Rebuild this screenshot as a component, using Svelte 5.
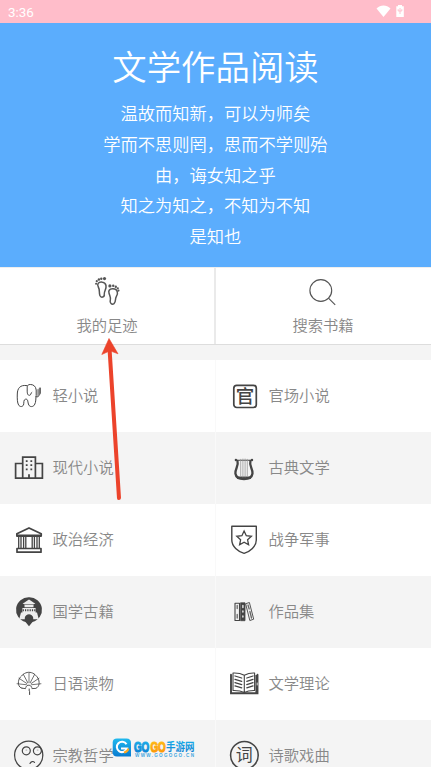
<script>
  const verses = ['温故而知新，可以为师矣', '学而不思则罔，思而不学则殆', '由，诲女知之乎', '知之为知之，不知为不知', '是知也'];
  const categories = [
    ['elephant', '轻小说'], ['official', '官场小说'],
    ['building', '现代小说'], ['lyre', '古典文学'],
    ['bank', '政治经济'], ['shield', '战争军事'],
    ['temple', '国学古籍'], ['books', '作品集'],
    ['tree', '日语读物'], ['openbook', '文学理论'],
    ['face', '宗教哲学'], ['lyric', '诗歌戏曲']
  ];
  const rays = [-84, -56, -28, 0, 28, 56, 84];
</script>

{#snippet icon(name)}
  <svg class="icon" viewBox="0 0 32 32" width="32" height="32" fill="none" stroke="#444" stroke-width="1.3" stroke-linejoin="round" stroke-linecap="round">
    {#if name === 'elephant'}
      <path d="M13.8 5.6C7 4.5 4.4 8.5 4.3 14C4.1 18 4.3 23 5.6 25C6.9 27.1 9.4 27 10.5 25C11.2 22.7 10.2 19.8 12.5 19.2C15.4 18.6 14.5 22.5 15.8 25C17 27.2 20 27 21.4 25C23.3 22 22.6 18 23.2 15.5V10C22.9 6.2 20.2 4.4 17.3 4.5C13.5 4.4 14.3 7.5 14.2 10C14.1 13 14.5 15.6 16.6 15.3C18.2 15 17.6 12.8 18.8 12.3" stroke-width="1" />
      <path d="M22.8 16.8H25L27.4 13.5V8" stroke-width=".9" />
      <path d="M25 9.5V16M26.4 8V14.5" stroke-width="1.2" stroke="#777" />
    {:else if name === 'official'}
      <rect x="4.8" y="5.3" width="22.5" height="22.2" rx="3" stroke-width="1.7" />
      <text x="16" y="23" class="seal">官</text>
    {:else if name === 'building'}
      <path d="M9.7 26.2V5.1H22.4V26.2M9.7 11.5H2.6V26.2H29.4V11.5H22.4" stroke-width="1.7" stroke-linejoin="miter" />
      <path d="M13.7 8.2V19M18.3 8.2V19" stroke-width="1.8" stroke-dasharray="1.8 2.3" stroke-linecap="butt" />
      <path d="M16 22.3V26" stroke-width="1.8" stroke-linecap="butt" />
    {:else if name === 'lyre'}
      <path d="M8.5 9C10 14 5.8 17 6.4 21.5C7 25.5 10.4 27 15 27C19.6 27 22.9 25.5 23.5 21.5C24.1 17 19.9 14 21.4 9" stroke-width="2.3" />
      <path d="M7.5 8.3H22.5" stroke-width="1.1" />
      <path d="M9 25.8H21" stroke-width="2.4" />
      <circle cx="6.9" cy="8" r="1.2" fill="#444" stroke="none" />
      <circle cx="23" cy="8" r="1.2" fill="#444" stroke="none" />
      <path d="M11.7 7.3V24M13.9 7V25M16.1 7V25M18.3 7.3V24" stroke-width=".8" stroke="#999" />
    {:else if name === 'bank'}
      <path d="M3.9 11.5V9.8L16 4L28.2 9.8V11.5Z" stroke-width="1.8" />
      <path d="M5.7 13V24M8 13V24M10.6 13V24M12.8 13V24M19.2 13V24M21.4 13V24M24 13V24M26.3 13V24" stroke-width="1.3" stroke-linecap="butt" />
      <path d="M4 24.5H28V28.2H4Z" stroke-width="1.7" />
      <path d="M4 12.2H28" stroke-width="1.6" />
    {:else if name === 'shield'}
      <path d="M2.8 2.2H27.3V16C27.3 22.5 21 27.5 15.1 29.4C9 27.5 2.8 22.5 2.8 16Z" stroke-width="1.4" />
      <path d="M15.1 7L17.3 11.7L22.4 12.3L18.6 15.8L19.6 20.8L15.1 18.3L10.6 20.8L11.6 15.8L7.8 12.3L12.9 11.7Z" stroke-width="1.3" stroke-linejoin="miter" />
    {:else if name === 'temple'}
      <path d="M16 1.2A12.6 12.6 0 0 1 19.5 26L16 30.3L12.5 26A12.6 12.6 0 0 1 16 1.2Z" fill="#444" stroke="none" />
      <path d="M9.6 7.2C12 6.8 13 5 16 3.5C19 5 20 6.8 22.4 7.2L20.8 8.3H11.2Z" fill="#eee" stroke="none" />
      <path d="M11.5 8.8H20.5V11.2H11.5ZM9.4 12H22.6V16.6H24L25.8 23.3H20.2V21.8C19.5 17 12.5 17 11.8 21.8V23.3H6.2L8 16.6H9.4Z" fill="#eee" stroke="none" />
      <path d="M9.7 14.3H22.5" stroke-width="2.1" stroke-dasharray="1.2 1.1" stroke-linecap="butt" />
    {:else if name === 'books'}
      <path d="M6 7.2H10.5V24.5H6Z" stroke-width="1.1" />
      <path d="M11.8 6.8H16V24.7H11.8Z" fill="#444" stroke-width=".8" />
      <path d="M17 7.6L20.4 6.5L24.7 23.2L21.2 24.4Z" stroke-width=".9" />
      <path d="M8.2 9.5V12.5M8.2 18.5V22M19 9L20.2 13M20.9 15.5L22.5 22" stroke-width="1.3" stroke="#666" />
      <path d="M13.9 9.5V11.5M13.9 15V16M13.9 20V21" stroke="#eee" stroke-width="1.4" />
    {:else if name === 'tree'}
      <path d="M9 20.2C4.5 19.5 4 11.5 8.5 8C12.5 3.1 19.3 3.1 23 7.7C27.5 11.5 27 19.5 22.5 20.4M9 20.2L12.5 20.6M22.5 20.4L19 20.6" stroke-width=".9" stroke-dasharray="5 .8" />
      {#each rays as angle}
        <path d="M16 14.5V5" transform="rotate({angle} 16 17)" stroke-width=".7" />
      {/each}
      <path d="M12.8 19.4C13.4 16.4 18 16.4 18.8 19.4M16.2 21V23L16.6 23.6V26.5" stroke-width="1" />
    {:else if name === 'openbook'}
      <path d="M2 6.8V25.3H28.5V6.8" stroke-width="1.9" stroke-linejoin="miter" />
      <path d="M4 5C8 4.8 12 5.4 15.3 7.2C18.8 5.4 22.4 4.8 25.6 5V22.5C22 22.4 18.5 22.8 15.3 24.5C12 22.8 8.2 22.4 4 22.5ZM15.3 7.5V25" stroke-width="1.1" />
      <path d="M6 8L12.7 10M6 11.3L12.7 13.3M6 14.6L12.7 16.6M6 17.9L12.7 19.9M24 8L17.8 10M24 11.3L17.8 13.3M24 14.6L17.8 16.6M24 17.9L17.8 19.9" stroke-width="1.3" />
      <path d="M27.7 7V25" stroke-width="2.6" stroke-linecap="butt" />
      <path d="M28.2 15V17" stroke="#ddd" stroke-width="1" />
    {:else if name === 'face'}
      <circle cx="15.7" cy="15.3" r="14.1" stroke-width="1.3" />
      <circle cx="13.3" cy="10.8" r="4" stroke-width="1.2" />
      <circle cx="24.4" cy="10.8" r="4" stroke-width="1.2" />
      <path d="M13 10.1H13.8M24.2 10.1H25" stroke-width=".8" stroke="#999" />
      <path d="M17 23.5C18 21.3 20.2 21 21.5 22.3" stroke-width="1.2" />
    {:else}
      <circle cx="15.4" cy="15.3" r="13.8" stroke-width="1.6" />
      <text x="15.3" y="21.3" class="lyric">词</text>
    {/if}
  </svg>
{/snippet}

<main>
  <div class="status">
    <span>3:36</span>
    <svg width="30" height="14" viewBox="0 0 30 14" fill="#fff">
      <path d="M.5 3.5C4.5-.4 10.5-.4 14.5 3.5L7.5 12Z" />
      <path d="M20.3 1.3H22V0H26V1.3H27.8V12H20.3Z" />
      <path d="M24 3V9M22.2 4.2V6H25.8V4.2" fill="none" stroke="#ffbdca" stroke-width=".9" />
    </svg>
  </div>

  <header>
    <h1>文学作品阅读</h1>
    {#each verses as verse}<p>{verse}</p>{/each}
  </header>

  <nav>
    <div class="action">
      <svg class="feet" width="30" height="32" viewBox="0 0 30 32" fill="none" stroke="#555" stroke-width="1.5">
        <path d="M8.5 7.2C4 6.5 2.9 9.5 4.3 12C6.1 15 4.8 17.5 5.9 20.5C7 23.3 10.8 22.3 10.3 19.2C9.9 16 12.7 14 12 10.5C11.5 8.3 10.2 7.4 8.5 7.2Z" />
        <path d="M18.5 13.8C15 14 14.4 16 15 18C15.5 20.5 17 22 16.3 25C15.5 28 17.8 30.3 20 28.7C22.4 26.7 20.6 24.3 22.4 21.4C24.3 18.5 24 13.5 18.5 13.8Z" />
        <g fill="#555" stroke="none">
          <circle cx="2.1" cy="8.7" r="1.05" /><circle cx="2.8" cy="6.2" r="1.1" /><circle cx="4.9" cy="4.5" r="1.2" /><circle cx="7.3" cy="3.7" r="1.2" /><circle cx="10.5" cy="3.6" r="1.6" />
          <circle cx="15.9" cy="10.9" r="1.6" /><circle cx="19.2" cy="10.8" r="1.2" /><circle cx="21.8" cy="11.7" r="1.2" /><circle cx="23.8" cy="13.3" r="1.1" /><circle cx="24.5" cy="15.6" r="1.05" />
        </g>
      </svg>
      <span>我的足迹</span>
    </div>
    <div class="action">
      <svg width="30" height="32" viewBox="0 0 30 32" fill="none" stroke="#555" stroke-width="1.15">
        <circle cx="12.8" cy="15.5" r="10.9" /><path d="M20.5 23.2L27.2 29.9" />
      </svg>
      <span>搜索书籍</span>
    </div>
  </nav>

  <section>
    {#each categories as [name, label]}
      <div class="cell">{@render icon(name)}<span>{label}</span></div>
    {/each}
  </section>

  <svg class="arrow" width="24" height="166" viewBox="0 0 24 166">
    <path d="M9.6 12L19 160" stroke="#ec432b" stroke-width="4" stroke-linecap="round" />
    <path d="M9 .5L18 15.8L10 12.8L1.8 16.5Z" fill="#ec432b" stroke="#ec432b" stroke-width=".6" stroke-linejoin="round" />
  </svg>

  <svg class="brand" width="86" height="24" viewBox="0 0 86 24">
    <defs>
      <linearGradient id="blue" x2="0" y2="1"><stop stop-color="#20b9ee" /><stop offset="1" stop-color="#087bd0" /></linearGradient>
      <linearGradient id="gold" x2="0" y2="1"><stop stop-color="#ffc51d" /><stop offset="1" stop-color="#fb9000" /></linearGradient>
    </defs>
    <path d="M5 .5H14.5Q19 .5 19 5V18.5H5Q.7 18.5 .7 14V4.5Q.7 .5 5 .5Z" fill="url(#blue)" />
    <path d="M14.5 6.2A5.2 5.2 0 1 0 15 10.5H9" fill="none" stroke="#fff" stroke-width="2.1" />
    <path d="M12 14.7C14.5 14 16 12.7 16.4 10.5" fill="none" stroke="#fba820" stroke-width="1.9" />
    <text x="21.9" y="13.8" class="go" textLength="15.4" lengthAdjust="spacingAndGlyphs" fill="url(#blue)" stroke="url(#blue)">GO</text>
    <text x="38.4" y="13.8" class="go" textLength="15.4" lengthAdjust="spacingAndGlyphs" fill="url(#gold)" stroke="url(#gold)">GO</text>
    <text x="54" y="12.8" class="game" textLength="28.5" lengthAdjust="spacingAndGlyphs" fill="url(#blue)">手游网</text>
    <text x="23" y="19.2" class="url" textLength="59">WWW.GOGOGO.CN</text>
  </svg>
</main>

<style>
  :global(body) { margin: 0; overflow: hidden; }
  main { position: relative; width: 431px; height: 767px; overflow: hidden; background: #fff; font-family: "Noto Sans CJK SC", sans-serif; font-weight: 350; }
  .status { height: 23px; box-sizing: border-box; padding: 1px 25px 0 8px; display: flex; align-items: center; justify-content: space-between; background: #ffbdca; color: #fff; font: 400 13.4px Roboto, sans-serif; }
  header { height: 244px; box-sizing: border-box; padding-top: 17px; background: #5badfd; color: #fff; text-align: center; }
  h1 { margin: 0 0 7.3px; font-size: 34.4px; line-height: 51px; font-weight: 350; }
  p { margin: 0; font-size: 17.25px; line-height: 30.7px; }
  nav { height: 78px; display: flex; box-sizing: border-box; border-top: 1px solid #eee; border-bottom: 1px solid #ddd; }
  .action { flex: 1; box-sizing: border-box; padding-top: 7px; display: flex; flex-direction: column; align-items: center; color: #888; }
  .action:first-child { flex: 0 0 214px; }
  .action + .action { padding-right: 1px; border-left: 2px solid #eaeaea; }
  .action span { font-size: 15.3px; line-height: 24px; margin-top: 4.5px; }
  .feet { margin-left: 4px; }
  section { display: grid; grid-template-columns: 215px 216px; grid-auto-rows: 72px; border-top: 15px solid #f4f4f4; }
  .cell { display: flex; align-items: center; padding-left: 13px; color: #888; font-size: 15.3px; }
  .cell:nth-child(even) { border-left: 1px solid #f9f9f9; }
  .cell:nth-child(4n), .cell:nth-child(4n + 3) { background: #f4f4f4; }
  .cell span { margin: -5px 0 0 7.5px; }
  .icon { flex: none; }
  .seal, .lyric { text-anchor: middle; fill: #444; stroke: none; font-family: "Noto Sans CJK SC", sans-serif; }
  .seal { font-size: 18.5px; font-weight: 500; }
  .lyric { font-size: 17px; font-weight: 400; }
  .arrow { position: absolute; left: 100px; top: 338px; }
  .brand { position: absolute; left: 112px; top: 738px; }
  .go { font: 700 15.5px "Liberation Sans", sans-serif; stroke-width: 1.2; }
  .game { font: 700 11px "Noto Sans CJK SC", sans-serif; }
  .url { font: 700 4.6px "Liberation Sans", sans-serif; fill: #45a8df; }
</style>
